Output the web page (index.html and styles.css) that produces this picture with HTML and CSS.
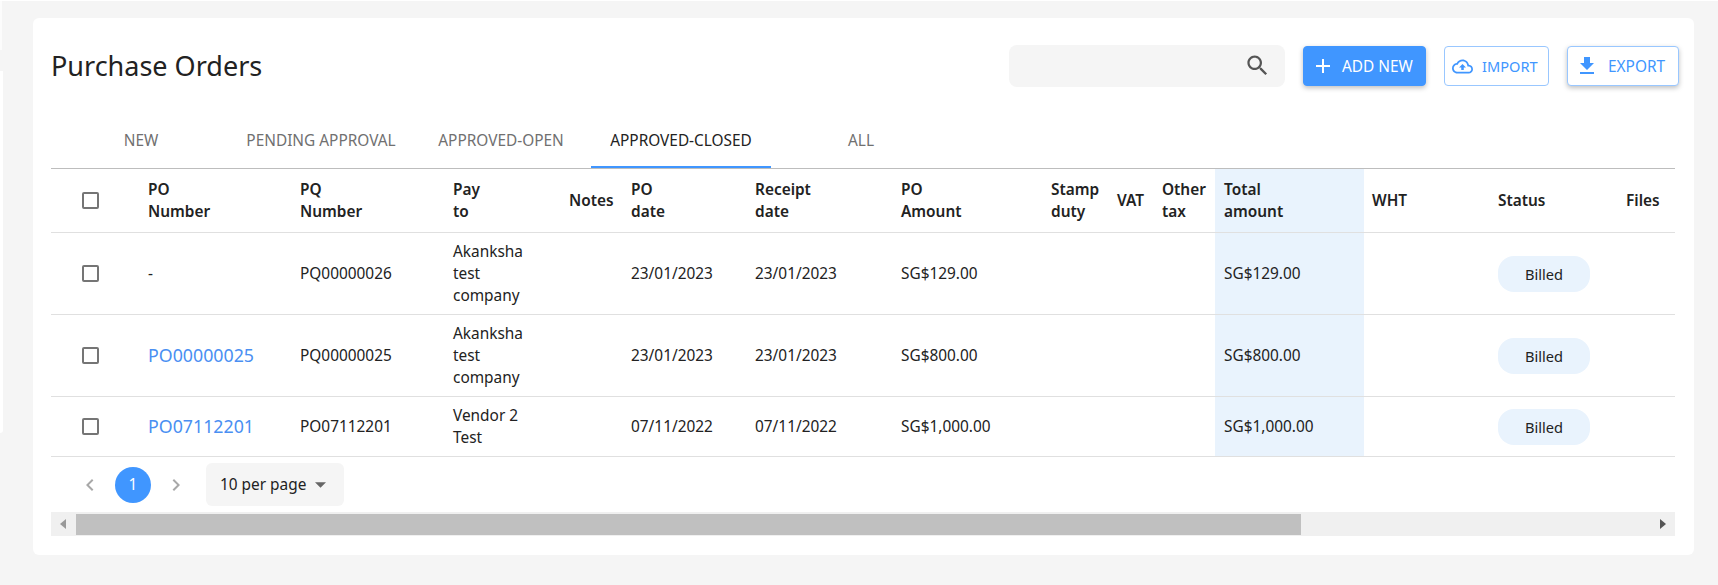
FILE: index.html
```html
<!DOCTYPE html>
<html lang="en">
<head>
    <meta charset="UTF-8">
    <title>Purchase Orders</title>
    <link rel="stylesheet" href="styles.css">
</head>
<body>
<div class="shell">
    <div class="side-edge">
        <div class="edge-top"></div>
        <div class="edge-main"></div>
    </div>
    <main class="content">
        <section class="card">
            <header class="card-head">
                <h1 class="title">Purchase Orders</h1>
                <div class="search">
                    <svg class="search-icon" viewBox="0 0 24 24"><path d="M15.5 14h-.79l-.28-.27C15.41 12.59 16 11.11 16 9.5 16 5.91 13.09 3 9.5 3S3 5.91 3 9.5 5.91 16 9.5 16c1.61 0 3.09-.59 4.23-1.57l.27.28v.79l5 4.99L20.49 19l-4.99-5zm-6 0C7.01 14 5 11.99 5 9.5S7.01 5 9.5 5 14 7.01 14 9.5 11.99 14 9.5 14z"/></svg>
                </div>
                <button class="btn btn-add">
                    <svg class="btn-icon" viewBox="0 0 24 24"><path d="M19 13h-6v6h-2v-6H5v-2h6V5h2v6h6v2z"/></svg>
                    ADD NEW
                </button>
                <button class="btn btn-import">
                    <svg class="import-icon" viewBox="0 0 24 24"><path d="M19.35 10.04C18.67 6.59 15.64 4 12 4 9.11 4 6.6 5.64 5.35 8.04 2.34 8.36 0 10.91 0 14c0 3.31 2.69 6 6 6h13c2.76 0 5-2.24 5-5 0-2.64-2.05-4.78-4.65-4.96zM19 18H6c-2.21 0-4-1.79-4-4 0-2.05 1.53-3.76 3.56-3.97l1.07-.11.5-.95C8.08 7.14 9.94 6 12 6c2.62 0 4.88 1.86 5.39 4.43l.3 1.5 1.53.11c1.56.1 2.78 1.41 2.78 2.96 0 1.65-1.35 3-3 3zM8 13h2.55v3h2.9v-3H16l-4-4z"/></svg>
                    IMPORT
                </button>
                <button class="btn btn-export">
                    <svg class="btn-icon" viewBox="0 0 24 24"><path d="M19 9h-4V3H9v6H5l7 7 7-7zM5 18v2h14v-2H5z"/></svg>
                    EXPORT
                </button>
            </header>

            <nav class="tabs">
                <a class="tab">NEW</a>
                <a class="tab">PENDING APPROVAL</a>
                <a class="tab">APPROVED-OPEN</a>
                <a class="tab active">APPROVED-CLOSED</a>
                <a class="tab">ALL</a>
            </nav>

            <div class="table-wrap">
                <table class="orders">
                    <colgroup>
                        <col class="c-check"><col class="c-po"><col class="c-pq"><col class="c-pay">
                        <col class="c-notes"><col class="c-date"><col class="c-receipt"><col class="c-amount">
                        <col class="c-stamp"><col class="c-vat"><col class="c-other"><col class="c-total">
                        <col class="c-wht"><col class="c-status"><col class="c-files">
                    </colgroup>
                    <thead>
                    <tr>
                        <th class="check-cell"><input type="checkbox" class="check"></th>
                        <th>PO<br>Number</th>
                        <th>PQ<br>Number</th>
                        <th>Pay<br>to</th>
                        <th>Notes</th>
                        <th>PO<br>date</th>
                        <th>Receipt<br>date</th>
                        <th>PO<br>Amount</th>
                        <th>Stamp<br>duty</th>
                        <th>VAT</th>
                        <th>Other<br>tax</th>
                        <th class="total">Total<br>amount</th>
                        <th>WHT</th>
                        <th>Status</th>
                        <th>Files</th>
                    </tr>
                    </thead>
                    <tbody>
                    <tr class="row-tall">
                        <td class="check-cell"><input type="checkbox" class="check"></td>
                        <td>-</td>
                        <td>PQ00000026</td>
                        <td>Akanksha<br>test<br>company</td>
                        <td></td>
                        <td>23/01/2023</td>
                        <td>23/01/2023</td>
                        <td>SG$129.00</td>
                        <td></td>
                        <td></td>
                        <td></td>
                        <td class="total">SG$129.00</td>
                        <td></td>
                        <td><span class="chip">Billed</span></td>
                        <td></td>
                    </tr>
                    <tr class="row-tall">
                        <td class="check-cell"><input type="checkbox" class="check"></td>
                        <td><a class="po-link">PO00000025</a></td>
                        <td>PQ00000025</td>
                        <td>Akanksha<br>test<br>company</td>
                        <td></td>
                        <td>23/01/2023</td>
                        <td>23/01/2023</td>
                        <td>SG$800.00</td>
                        <td></td>
                        <td></td>
                        <td></td>
                        <td class="total">SG$800.00</td>
                        <td></td>
                        <td><span class="chip">Billed</span></td>
                        <td></td>
                    </tr>
                    <tr class="row-short">
                        <td class="check-cell"><input type="checkbox" class="check"></td>
                        <td><a class="po-link">PO07112201</a></td>
                        <td>PO07112201</td>
                        <td>Vendor 2<br>Test</td>
                        <td></td>
                        <td>07/11/2022</td>
                        <td>07/11/2022</td>
                        <td>SG$1,000.00</td>
                        <td></td>
                        <td></td>
                        <td></td>
                        <td class="total">SG$1,000.00</td>
                        <td></td>
                        <td><span class="chip">Billed</span></td>
                        <td></td>
                    </tr>
                    </tbody>
                </table>
            </div>

            <div class="pager">
                <svg class="chevron" viewBox="0 0 24 24"><path d="M15.41 7.41 14 6l-6 6 6 6 1.41-1.41L10.83 12z"/></svg>
                <span class="page-num">1</span>
                <svg class="chevron" viewBox="0 0 24 24"><path d="M8.59 16.59 10 18l6-6-6-6-1.41 1.41L13.17 12z"/></svg>
                <div class="per-page">
                    10 per page
                    <svg class="caret" viewBox="0 0 12 6"><path d="M0 0h12L6 6z"/></svg>
                </div>
            </div>

            <div class="scrollbar">
                <span class="arrow arrow-left"></span>
                <span class="thumb"></span>
                <span class="arrow arrow-right"></span>
            </div>
        </section>
    </main>
</div>
</body>
</html>
```
FILE: styles.css
```css
* {
    box-sizing: border-box;
}

html, body {
    margin: 0;
    height: 100%;
}

body {
    font-family: "Noto Sans", "Open Sans", sans-serif;
    font-size: 15.4px;
    line-height: 22px;
    color: #222222;
    background-color: #f5f5f5;
    overflow: hidden;
}

.shell {
    display: flex;
    height: 100%;
    border-top: 1px solid #ffffff;
}

.side-edge {
    width: 3px;
    flex: none;
}

.edge-top {
    width: 2px;
    height: 49px;
    background-color: #fcfcfc;
}

.edge-main {
    width: 3px;
    height: 362px;
    margin-top: 21px;
    background-color: #ffffff;
    border-radius: 0 0 3px 0;
}

.content {
    flex: 1;
    padding: 17px 24px 0 30px;
}

.card {
    height: 537px;
    padding: 27px 15px 18px 18px;
    background-color: #ffffff;
    border-radius: 6px;
}

.card-head {
    display: flex;
    align-items: center;
    height: 42px;
}

.title {
    margin: 0 auto 0 0;
    font-size: 27px;
    line-height: 36px;
    font-weight: 400;
    color: #222222;
}

.search {
    display: flex;
    align-items: center;
    justify-content: flex-end;
    width: 276px;
    height: 42px;
    margin-right: 18px;
    padding-right: 14px;
    background-color: #f5f5f5;
    border-radius: 8px;
}

.search-icon {
    width: 27px;
    height: 27px;
    margin-top: -1px;
    fill: #555555;
}

.btn {
    display: flex;
    align-items: center;
    height: 40px;
    margin-right: 18px;
    padding: 0;
    font-family: inherit;
    font-size: 15.4px;
    font-weight: 400;
    border-radius: 4px;
    border: 1px solid #99c7ff;
    background-color: #ffffff;
    color: #4096ff;
}

.btn:last-child {
    margin-right: 0;
}

.btn-icon {
    width: 24px;
    height: 24px;
    fill: currentColor;
}

.btn-add {
    width: 123px;
    padding-left: 7px;
    gap: 7px;
    color: #ffffff;
    background-color: #4096ff;
    border-color: #4096ff;
    box-shadow: 0 2px 5px rgba(0, 0, 0, 0.25);
}

.btn-import {
    width: 105px;
    padding-left: 7px;
    gap: 9px;
    font-size: 14.6px;
}

.import-icon {
    width: 21px;
    height: 21px;
    fill: currentColor;
}

.btn-export {
    width: 112px;
    padding-left: 7px;
    gap: 9px;
    box-shadow: 0 2px 5px rgba(0, 0, 0, 0.25);
}

.tabs {
    display: flex;
    margin-top: 33px;
    margin-right: 4px;
}

.tab {
    width: 180px;
    height: 48px;
    padding-top: 10px;
    text-align: center;
    color: #707070;
    border-bottom: 2px solid transparent;
}

.tab.active {
    color: #222222;
    border-bottom-color: #4096ff;
}

.table-wrap {
    margin-right: 4px;
    overflow: hidden;
    border-top: 1px solid #bdbdbd;
}

.orders {
    width: 1624px;
    table-layout: fixed;
    border-collapse: separate;
    border-spacing: 0;
}

.c-check { width: 89px; }
.c-po { width: 152px; }
.c-pq { width: 153px; }
.c-pay { width: 116px; }
.c-notes { width: 62px; }
.c-date { width: 124px; }
.c-receipt { width: 146px; }
.c-amount { width: 150px; }
.c-stamp { width: 66px; }
.c-vat { width: 45px; }
.c-other { width: 61px; }
.c-total { width: 149px; }
.c-wht { width: 126px; }
.c-status { width: 128px; }
.c-files { width: 57px; }

.orders th,
.orders td {
    padding: 0 0 0 8px;
    text-align: left;
    vertical-align: middle;
    border-bottom: 1px solid #e0e0e0;
}

.orders th {
    height: 64px;
    font-weight: 600;
}

.row-tall td {
    height: 82px;
}

.row-short td {
    height: 60px;
}

.orders .check-cell {
    padding-left: 31px;
}

.orders .total {
    padding-left: 9px;
    background-color: #e9f3fd;
}

.check {
    display: block;
    width: 17px;
    height: 17px;
    margin: 0;
    appearance: none;
    border: 2px solid #757575;
    border-radius: 2px;
    background-color: #ffffff;
}

.po-link {
    font-size: 17.8px;
    color: #4a8ff2;
}

.chip {
    display: block;
    width: 92px;
    height: 36px;
    line-height: 36px;
    font-size: 14.6px;
    text-align: center;
    border-radius: 16px;
    background-color: #e9f3fd;
}

.pager {
    display: flex;
    align-items: center;
    height: 55px;
    padding-left: 27px;
}

.chevron {
    width: 24px;
    height: 24px;
    fill: #a8a8a8;
}

.page-num {
    width: 36px;
    height: 36px;
    margin: 0 13px 0 13px;
    line-height: 36px;
    text-align: center;
    font-size: 15.4px;
    color: #ffffff;
    border-radius: 50%;
    background-color: #4096ff;
}

.per-page {
    display: flex;
    align-items: center;
    width: 138px;
    height: 43px;
    margin-left: 18px;
    padding-left: 14px;
    font-size: 15.4px;
    background-color: #f5f5f5;
    border-radius: 6px;
}

.caret {
    width: 11px;
    height: 6px;
    margin-left: 9px;
    fill: #666666;
}

.scrollbar {
    display: flex;
    align-items: center;
    height: 24px;
    margin-right: 4px;
    background-color: #f0f0f0;
}

.arrow {
    width: 0;
    height: 0;
    border-top: 5.5px solid transparent;
    border-bottom: 5.5px solid transparent;
}

.arrow-left {
    margin-left: 9px;
    border-right: 6px solid #999999;
}

.thumb {
    width: 1225px;
    height: 21px;
    margin-left: 10px;
    background-color: #c0c0c0;
}

.arrow-right {
    margin-left: auto;
    margin-right: 9px;
    border-left: 6px solid #555555;
}
```
